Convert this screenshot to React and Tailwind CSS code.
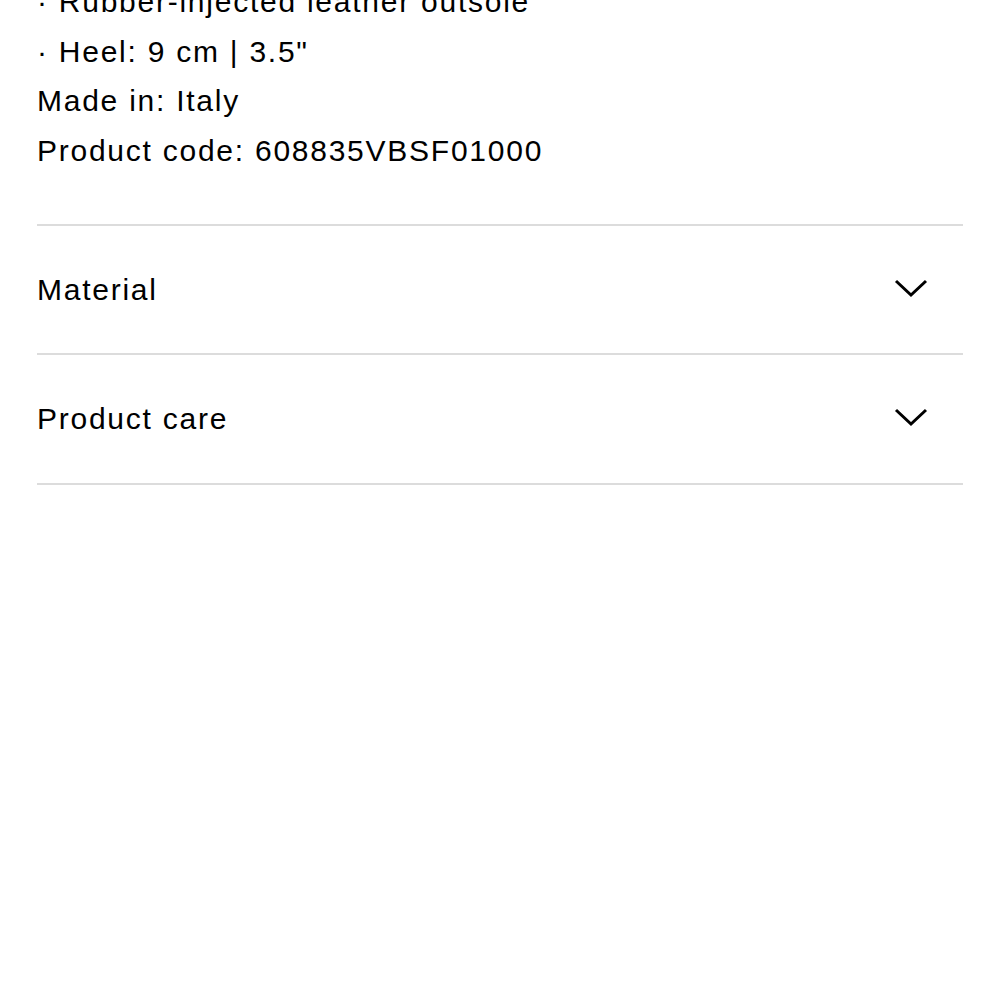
import React from 'react';

const Chevron = () => (
  <svg width="34" height="20" viewBox="0 0 34 20" fill="none" className="shrink-0 -mt-[4px]">
    <path d="M2 3 L17 17 L32 3" stroke="#000" strokeWidth="3" />
  </svg>
);

const Row = ({ label }) => (
  <div className="flex items-center justify-between h-[129.5px] border-b-2 border-[#dcdcdc] pr-[35px]">
    <span>{label}</span>
    <Chevron />
  </div>
);

export default function App() {
  return (
    <div className="min-h-screen bg-white text-black overflow-hidden px-[37px] text-[30px] tracking-[1.75px] leading-[49.7px] font-['Liberation_Sans',sans-serif]">
      {/* Details */}
      <div className="mt-[-23px]">
        <p>· Rubber-injected leather outsole</p>
        <p>· Heel: 9 cm | 3.5"</p>
        <p>Made in: Italy</p>
        <p>Product code: 608835VBSF01000</p>
      </div>

      {/* Accordions */}
      <div className="mt-[48px] border-t-2 border-[#dcdcdc]">
        <Row label="Material" />
        <Row label="Product care" />
      </div>
    </div>
  );
}
